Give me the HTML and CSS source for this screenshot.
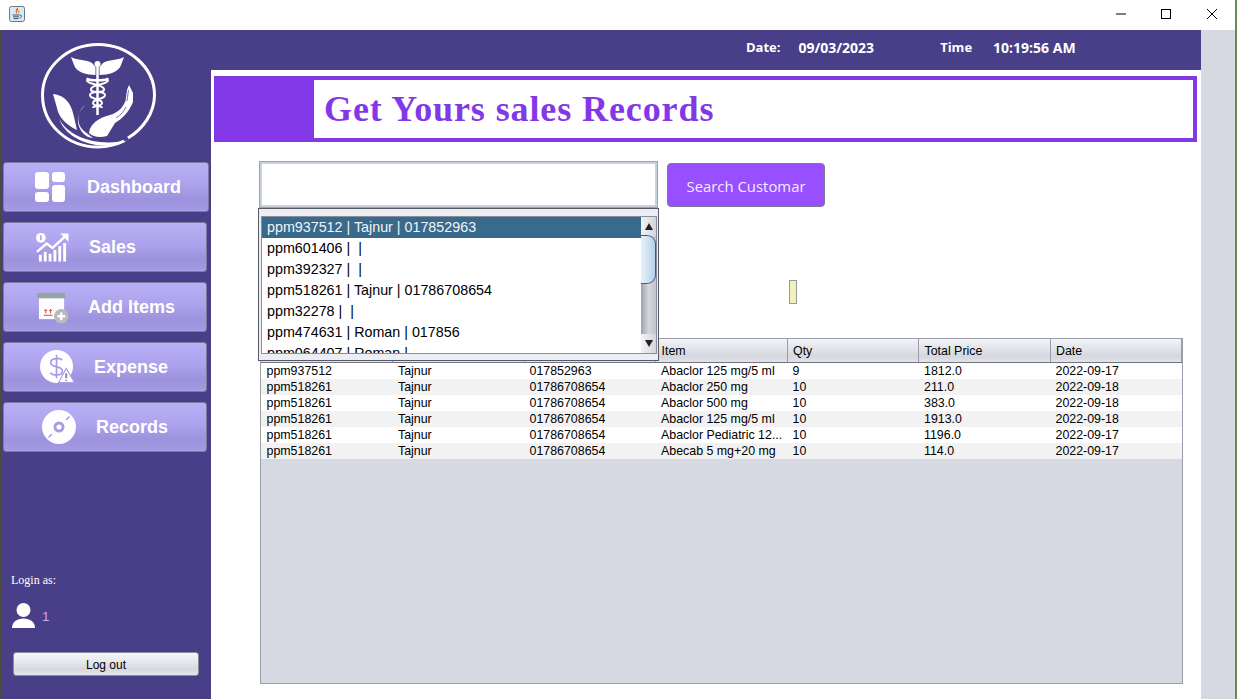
FILE: index.html
```html
<!DOCTYPE html>
<html lang="en">
<head>
<meta charset="utf-8">
<title>Get Yours sales Records</title>
<link rel="stylesheet" href="styles.css">
</head>
<body>
<div class="desk-edge desk-left"></div>
<div class="window">
  <header class="titlebar">
    <svg class="java-icon" viewBox="0 0 16 16" aria-hidden="true">
      <rect x=".5" y=".5" width="15" height="15" rx="2" fill="#dfe8ee" stroke="#5f7b8e"/>
      <path d="M8.500 1.500C10.500 4 7 5 8 8 5.800 6.500 6.500 4 8.500 1.500Z" fill="#e8641b"/>
      <path d="M10.500 4c.5 1.800-1.500 2.200-1 4C8.300 6.800 8.800 5 10.500 4Z" fill="#e8641b"/>
      <path d="M3.500 9h7M4 10.800h6M4.500 12.600h5M11 9c2.200 0 2.200 2.500-.5 3" fill="none" stroke="#2f5a7a" stroke-width="1"/>
    </svg>
    <div class="window-controls">
      <svg viewBox="0 0 10 10" class="win-min" aria-hidden="true"><path d="M0 5h10" stroke="#000" stroke-width="1"/></svg>
      <svg viewBox="0 0 10 10" class="win-max" aria-hidden="true"><rect x=".5" y=".5" width="9" height="9" fill="none" stroke="#000"/></svg>
      <svg viewBox="0 0 10 10" class="win-close" aria-hidden="true"><path d="M0 0l10 10M10 0L0 10" stroke="#000" stroke-width="1"/></svg>
    </div>
  </header>
  <div class="frame">
    <aside class="sidebar">
      <svg class="logo" viewBox="38 40 120 110" aria-hidden="true">
        <path d="M124 141C114 146 104 147 98 147 68 147 42.500 125 42.500 95 42.500 67 68 44.500 98 44.500 128 44.500 154.500 67 154.500 95 154.500 113 143 129 128 138" fill="none" stroke="#fff" stroke-width="3"/>
        <path d="M71 57C78 61 86 59 92 63L95.500 67 95.500 75C87 75 76 72 74 65Z" fill="#fff"/>
        <path d="M124 57C117 61 109 59 103 63L99.500 67 99.500 75C108 75 119 72 121 65Z" fill="#fff"/>
        <circle cx="97.500" cy="64" r="3" fill="#fff"/>
        <path d="M97.500 64V115" stroke="#fff" stroke-width="2.500"/>
        <path d="M87 78C90 84 108 77 108 80.500 108 84.500 92 84 91 89 90 94 105 90 105 95 105 100 93 98 93 103 93 107 102 105 102 108" fill="none" stroke="#fff" stroke-width="2"/>
        <path d="M108 78C105 84 87 77 87 80.500 87 84.500 103 84 104 89 105 94 90 90 90 95 90 100 102 98 102 103 102 107 93 105 93 108" fill="none" stroke="#fff" stroke-width="2"/>
        <path d="M89 133C90 124 98 118 110 115 117 113 122 109 125.500 101L127 90 129 85 133 93 133 102C129 112 122 119 115 123L107 136C100 138 93 137 89 133Z" fill="#fff"/>
        <path d="M127 101L128.500 90M116 118C121 115 124 111 126 107" fill="none" stroke="#483f88" stroke-width=".7"/>
        <path d="M53 94C62 95 71 100 74 117L77 130C66 125 58 116 57 108Z" fill="#fff"/>
        <path d="M86 105C79 108 74 122 84 131L93 138 88 137C76 130 74 113 86 105Z" fill="#fff"/>
        <path d="M59 118C64 130 80 140 100 142 110 143 120 142 127 140.500 118 146 106 146 96 145 78 142 63 132 59 118Z" fill="#fff"/>
      </svg>
      <nav class="nav">
        <a class="nav-btn nav-dashboard">
          <svg class="nav-icon" viewBox="0 0 30 30" aria-hidden="true"><g fill="#fff"><rect x="0" y="0" width="14" height="17" rx="3"/><rect x="17" y="0" width="13" height="10" rx="3"/><rect x="0" y="20" width="14" height="10" rx="3"/><rect x="17" y="13" width="13" height="17" rx="3"/></g></svg>
          <span>Dashboard</span>
        </a>
        <a class="nav-btn nav-sales">
          <svg class="nav-icon" viewBox="0 0 34 30" aria-hidden="true"><g fill="#fff"><rect x="3" y="23" width="3" height="7"/><rect x="8" y="20" width="3" height="10"/><rect x="13" y="22" width="3" height="8"/><rect x="18" y="18" width="3" height="12"/><rect x="23" y="14" width="3" height="16"/><rect x="28" y="11" width="3" height="19"/><circle cx="5" cy="5.500" r="5"/><path d="M25 1h8.500v8.500l-3-2.800L31 7l-2.500-2.500Z"/></g><path d="M1 20l10-8.500 6 4.500L30 4" fill="none" stroke="#fff" stroke-width="2.400"/><path d="M5 3v5" stroke="#a097e4" stroke-width="1.500"/></svg>
          <span>Sales</span>
        </a>
        <a class="nav-btn nav-add">
          <svg class="nav-icon" viewBox="0 0 33 32" aria-hidden="true"><rect x="2" y="3" width="26" height="24" fill="#fdfcff"/><rect x="0" y="0" width="29" height="5.500" fill="#94a6a0"/><path d="M9 21v-4M7.500 18.500L9 17l1.500 1.500M14 21v-4M12.500 18.500L14 17l1.500 1.500" stroke="#e03c31" stroke-width="1" fill="none"/><path d="M7 23h9" stroke="#e03c31"/><circle cx="25" cy="24" r="7.500" fill="#b9b9bd"/><path d="M25 20v8M21 24h8" stroke="#fff" stroke-width="2.500"/></svg>
          <span>Add Items</span>
        </a>
        <a class="nav-btn nav-expense">
          <svg class="nav-icon" viewBox="0 0 36 36" aria-hidden="true"><circle cx="17" cy="17" r="17" fill="#fff"/><path d="M23 10.500C21 8 11 7.500 11 13 11 18.500 23 15.500 23 21.500 23 27 13 26.500 10.500 23.500M17 5v24" fill="none" stroke="#a79de6" stroke-width="1.800"/><path d="M27 19L35.500 33.500H19Z" fill="#fff" stroke="#a79de6" stroke-width="1.200"/><path d="M27 24v5M27 30.500v1.500" stroke="#8b84a8" stroke-width="2"/></svg>
          <span>Expense</span>
        </a>
        <a class="nav-btn nav-records">
          <svg class="nav-icon" viewBox="0 0 34 34" aria-hidden="true"><circle cx="17" cy="17" r="17" fill="#fff"/><circle cx="17" cy="17" r="5.500" fill="#a79de6"/><circle cx="17" cy="17" r="2.500" fill="#fff"/><path d="M24 10l3.500-3.500M10 24l-3.500 3.500" stroke="#a79de6" stroke-width="1.500"/></svg>
          <span>Records</span>
        </a>
      </nav>
      <div class="account">
        <p class="login-label">Login as:</p>
        <div class="user">
          <svg class="user-icon" viewBox="0 0 23 25" aria-hidden="true"><circle cx="11.500" cy="7" r="7" fill="#fff"/><path d="M0 25C0 19 5 15.500 11.500 15.500S23 19 23 25Z" fill="#fff"/></svg>
          <span class="user-name">1</span>
        </div>
        <button class="logout" type="button">Log out</button>
      </div>
    </aside>
    <main class="main">
      <div class="topbar">
        <span class="top-label">Date:</span><span class="top-value top-date">09/03/2023</span>
        <span class="top-label top-time">Time</span><span class="top-value">10:19:56 AM</span>
      </div>
      <section class="banner">
        <div class="banner-title"><h1>Get Yours sales Records</h1></div>
      </section>
      <section class="search">
        <input class="search-input" type="text" aria-label="Search customer">
        <button class="search-btn" type="button">Search Customar</button>
        <div class="popup">
          <div class="popup-inner">
            <ul class="popup-list">
              <li class="selected">ppm937512 | Tajnur | 017852963</li>
              <li>ppm601406 | &nbsp;|</li>
              <li>ppm392327 | &nbsp;|</li>
              <li>ppm518261 | Tajnur | 01786708654</li>
              <li>ppm32278 | &nbsp;|</li>
              <li>ppm474631 | Roman | 017856</li>
              <li>ppm064407 | Roman |</li>
            </ul>
            <div class="scrollbar">
              <div class="scroll-btn"><span class="arrow-up"></span></div>
              <div class="scroll-track"><div class="scroll-thumb"></div></div>
              <div class="scroll-btn"><span class="arrow-down"></span></div>
            </div>
          </div>
        </div>
      </section>
      <div class="marker"></div>
      <section class="table-wrap">
        <table class="records">
          <thead>
            <tr><th></th><th></th><th></th><th>Item</th><th>Qty</th><th>Total Price</th><th>Date</th></tr>
          </thead>
          <tbody>
            <tr><td>ppm937512</td><td>Tajnur</td><td>017852963</td><td>Abaclor 125 mg/5 ml</td><td>9</td><td>1812.0</td><td>2022-09-17</td></tr>
            <tr><td>ppm518261</td><td>Tajnur</td><td>01786708654</td><td>Abaclor 250 mg</td><td>10</td><td>211.0</td><td>2022-09-18</td></tr>
            <tr><td>ppm518261</td><td>Tajnur</td><td>01786708654</td><td>Abaclor 500 mg</td><td>10</td><td>383.0</td><td>2022-09-18</td></tr>
            <tr><td>ppm518261</td><td>Tajnur</td><td>01786708654</td><td>Abaclor 125 mg/5 ml</td><td>10</td><td>1913.0</td><td>2022-09-18</td></tr>
            <tr><td>ppm518261</td><td>Tajnur</td><td>01786708654</td><td>Abaclor Pediatric 12...</td><td>10</td><td>1196.0</td><td>2022-09-17</td></tr>
            <tr><td>ppm518261</td><td>Tajnur</td><td>01786708654</td><td>Abecab 5 mg+20 mg</td><td>10</td><td>114.0</td><td>2022-09-17</td></tr>
          </tbody>
        </table>
      </section>
    </main>
    <div class="gutter"></div>
  </div>
</div>
<div class="desk-edge desk-right"></div>
</body>
</html>
```
FILE: styles.css
```css
* { box-sizing: border-box; }
html, body { margin: 0; height: 699px; overflow: hidden; }
body { display: flex; width: 1237px; background: #fff; font-family: "Liberation Sans", Arial, sans-serif; color: #000; }

.desk-edge { flex: none; }
.desk-left { width: 1px; background: linear-gradient(#fff 0 30px, #4d4a35 30px); }
.desk-right { width: 2px; background: #668a55; }

.window { width: 1234px; height: 699px; display: flex; flex-direction: column; }

.titlebar { flex: none; height: 30px; background: #fff; display: flex; align-items: center; justify-content: space-between; padding-left: 8px; }
.java-icon { width: 16px; height: 16px; margin-top: -2px; }
.window-controls { display: flex; align-items: center; padding-right: 18px; margin-top: -3px; }
.window-controls svg { width: 10px; height: 10px; display: block; }
.win-min { margin-right: 35px; }
.win-max { margin-right: 36px; }

.frame { flex: 1; display: flex; min-height: 0; }

/* Sidebar */
.sidebar { flex: none; width: 210px; background: #483f88; display: flex; flex-direction: column; padding: 10px 0 23px 2px; }
.logo { width: 120px; height: 110px; margin-left: 35px; display: block; }
.nav { display: flex; flex-direction: column; gap: 10px; margin-top: 12px; }
.nav-btn { display: flex; align-items: center; width: 204px; height: 50px; border: 1px solid #7c7a9e; border-radius: 3px; background: linear-gradient(#b8aff6 0%, #ada3ec 45%, #9d92dd 75%, #a49ae2 100%); box-shadow: inset 0 -1px 0 #aba2e4; color: #fff; font-size: 18px; font-weight: 700; }
.nav-icon { flex: none; display: block; }
.nav-dashboard { width: 206px; padding-left: 31px; }
.nav-dashboard .nav-icon { width: 30px; height: 30px; margin-right: 22px; }
.nav-sales { padding-left: 32px; }
.nav-sales .nav-icon { width: 33px; height: 30px; margin-right: 20px; }
.nav-add { padding-left: 33px; }
.nav-add .nav-icon { width: 32px; height: 31px; margin: 2px 19px 0 0; }
.nav-expense { padding-left: 36px; }
.nav-expense .nav-icon { width: 35px; height: 35px; margin-right: 19px; }
.nav-records { padding-left: 38px; }
.nav-records .nav-icon { width: 34px; height: 34px; margin-right: 20px; }

.account { margin-top: auto; padding-left: 8px; }
.login-label { margin: 0; font-family: "Liberation Serif", serif; font-size: 12px; line-height: 13px; color: #fff; }
.user { display: flex; align-items: center; margin-top: 16px; padding-left: 1px; }
.user-icon { width: 23px; height: 25px; display: block; }
.user-name { margin: 2px 0 0 7px; font-size: 13.500px; color: #cfa6ee; }
.logout { display: block; width: 186px; height: 24px; margin: 24px 0 0 2px; padding: 1px 0 0; border: 1px solid #8b8d9a; border-radius: 3px; background: linear-gradient(#f6f6f8 0%, #e4e6ea 45%, #d6d8df 75%, #e6e7ec 100%); font: 12px "Liberation Sans", Arial, sans-serif; color: #000; }

/* Main */
.main { flex: none; width: 990px; background: #fff; display: flex; flex-direction: column; }
.topbar { flex: none; height: 40px; background: #483f88; display: flex; align-items: center; padding-left: 535px; padding-bottom: 6px; color: #fff; font-family: "Open Sans", sans-serif; font-size: 13px; font-weight: 700; }
.top-label { margin-right: 18px; }
.top-time { margin-right: 21px; }
.top-value { font-size: 14px; }
.top-date { margin-right: 66px; }
.banner { flex: none; height: 66px; margin: 6px 4px 0 3px; border: 4px solid #8338e8; border-left-width: 100px; background: #fff; }
.banner-title { height: 100%; display: flex; align-items: center; padding-left: 10px; }
.banner-title h1 { margin: 0; font-family: "Liberation Serif", serif; font-size: 36px; font-weight: 700; letter-spacing: .9px; color: #8338e8; line-height: 40px; }

.search { position: relative; flex: none; display: flex; align-items: center; height: 47px; margin: 19px 0 0 48px; gap: 9px; }
.search-input { width: 399px; height: 47px; padding: 0; border: 1px solid #7fa9d0; outline: 2px solid #c9d2dc; outline-offset: -3px; background: #fff; }
.search-btn { width: 158px; height: 44px; margin-top: 1px; padding: 2px 0 0; border: 1px solid #7d7a92; border-radius: 4px; background: #984fff; color: #f2ecff; font-family: "Open Sans", sans-serif; font-size: 14.900px; }

/* Autocomplete popup over the table */
.popup { position: absolute; left: -1px; top: 47px; width: 401px; height: 153px; border: 1px solid #565a66; background: #eceef4; padding: 7px 1px 6px 2px; z-index: 2; }
.popup-inner { display: flex; height: 100%; border: 1px solid #8a8e9c; background: #fff; }
.popup-list { flex: 1; margin: 0; padding: 0; list-style: none; overflow: hidden; font-size: 14.300px; }
.popup-list li { height: 21px; line-height: 20px; padding-left: 5px; white-space: nowrap; }
.popup-list .selected { background: #39698b; color: #f0f5fa; }
.scrollbar { flex: none; width: 15px; display: flex; flex-direction: column; background: #fff; }
.scroll-btn { flex: none; height: 19px; display: flex; align-items: center; justify-content: center; background: linear-gradient(90deg, #f2f3f6, #d3d5dc); }
.arrow-up { border: 4px solid transparent; border-top: 0; border-bottom: 7px solid #222; }
.arrow-down { border: 4px solid transparent; border-bottom: 0; border-top: 7px solid #222; }
.scroll-track { flex: 1; background: linear-gradient(90deg, #9fa2ab, #d5d7dd 50%, #c2c4cb); }
.scroll-thumb { height: 49px; margin-top: -1px; border: 1px solid #3d5f80; border-left: 0; border-radius: 0 9px 9px 0; background: linear-gradient(90deg, #e7f2fa, #b7d1e8); }

.marker { flex: none; width: 8px; height: 24px; margin: 72px 0 0 578px; border: 1px solid #9a9a9a; background: #f0f0bd; }

.table-wrap { flex: none; width: 923px; height: 346px; margin: 34px 0 0 49px; border: 1px solid #9a9dab; background: #d6d9e1; }
.records { width: 100%; border-collapse: collapse; table-layout: fixed; font-size: 12.400px; }
.records th { height: 23px; padding: 1px 0 0 5.500px; text-align: left; font-weight: 400; border-right: 1px solid #9a9dab; border-bottom: 1px solid #72757f; background: linear-gradient(#f2f3f6, #dfe1e7 50%, #d5d7de 75%, #e2e3e9); }
.records td { height: 16px; padding: 0 0 0 5.500px; line-height: 16px; white-space: nowrap; overflow: hidden; background: #fff; }
.records tbody tr:nth-child(even) td { background: #f2f2f2; }

.gutter { flex: 1; background: #d6d9e1; }
```
